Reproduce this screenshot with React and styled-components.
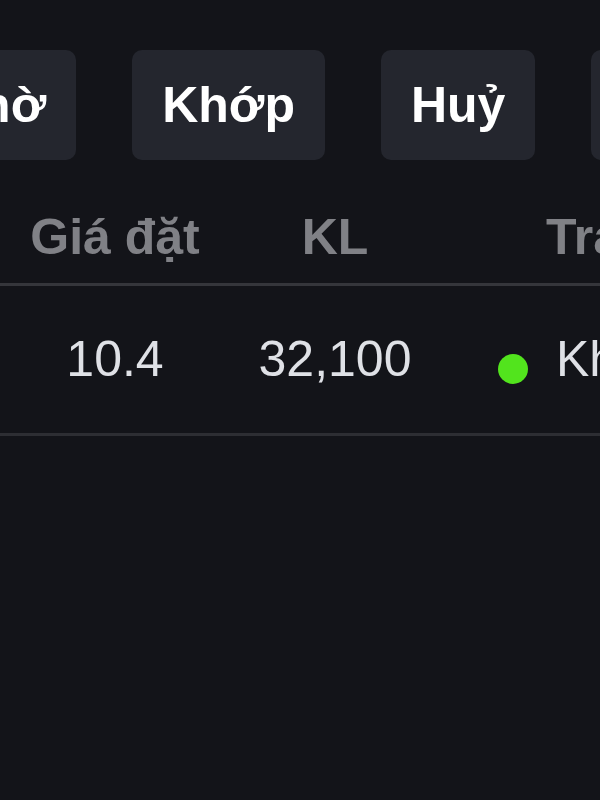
import React from "react";
import styled, { createGlobalStyle } from "styled-components";

const Global = createGlobalStyle`
  html, body { margin: 0; padding: 0; background: #131419; }
  body { font-family: "Liberation Sans", Arial, Helvetica, sans-serif; }
`;

const Screen = styled.div`
  width: 600px;
  height: 800px;
  overflow: hidden;
  background: #131419;
`;

const Tabs = styled.div`
  display: flex;
  gap: 56px;
  padding-top: 50px;
  margin-left: -86px;
`;

const Tab = styled.div`
  flex: none;
  height: 110px;
  padding: 0 30px;
  border-radius: 10px;
  background: #24262e;
  color: #ffffff;
  font-size: 50px;
  font-weight: 700;
  display: flex;
  align-items: center;
  white-space: nowrap;
`;

const Grid = styled.div`
  display: grid;
  grid-template-columns: 230px 210px 454px;
  width: 894px;
`;

const HeadCell = styled.div`
  padding: 49px 0 16px;
  font-size: 50px;
  font-weight: 700;
  color: #808186;
  line-height: 1.15;
  white-space: nowrap;
  text-align: ${(p) => p.$align || "center"};
  padding-left: ${(p) => p.$pl || 0}px;
  border-bottom: 3px solid #35363b;
`;

const Cell = styled.div`
  height: 147px;
  display: flex;
  align-items: center;
  justify-content: ${(p) => p.$justify || "center"};
  padding-left: ${(p) => p.$pl || 0}px;
  font-size: 50px;
  color: #dfe1e6;
  white-space: nowrap;
  border-bottom: 3px solid #2d2e33;
`;

const Dot = styled.span`
  width: 30px;
  height: 30px;
  border-radius: 50%;
  background: #52e41d;
  margin-top: 20px;
  margin-right: 28px;
  flex: none;
`;

export default function App() {
  return (
    <Screen>
      <Global />
      <Tabs>
        <Tab>Chờ</Tab>
        <Tab>Khớp</Tab>
        <Tab>Huỷ</Tab>
        <Tab>Tất cả</Tab>
      </Tabs>
      <Grid>
        <HeadCell>Giá đặt</HeadCell>
        <HeadCell>KL</HeadCell>
        <HeadCell $align="left" $pl={106}>Trạng thái</HeadCell>
        <Cell>10.4</Cell>
        <Cell>32,100</Cell>
        <Cell $justify="flex-start" $pl={58}>
          <Dot />
          Khớp
        </Cell>
      </Grid>
    </Screen>
  );
}
